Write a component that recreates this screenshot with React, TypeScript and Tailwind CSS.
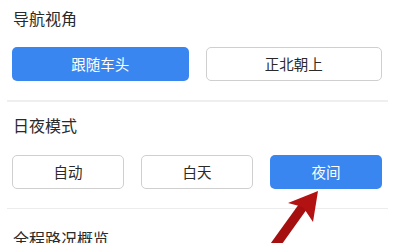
const font = { fontFamily: '"Noto Sans CJK SC", "Noto Sans", sans-serif' };

function OptionButton({ label, active }: { label: string; active?: boolean }) {
  return (
    <button
      className={`flex h-[34px] items-center justify-center rounded-[5px] text-[14.5px] ${
        active ? "bg-[#3a86f0] text-white" : "border border-[#cfcfcf] bg-white text-[#2a2a2a]"
      }`}
    >
      {label}
    </button>
  );
}

export default function App() {
  return (
    <div className="relative h-[243px] w-[400px] overflow-hidden bg-white" style={font}>
      <section className="pl-[12px] pr-[18px] pt-[8px]">
        <h3 className="pl-px text-[16px] leading-[21px] text-[#2a2a2a]">导航视角</h3>
        <div className="mt-[18px] grid grid-cols-2 gap-[17px]">
          <OptionButton label="跟随车头" active />
          <OptionButton label="正北朝上" />
        </div>
      </section>
      <div className="mx-[7px] mt-[19px] h-[2px] w-[381px] bg-[#efefef]" />

      <section className="pl-[12px] pr-[18px] pt-[13px]">
        <h3 className="pl-px text-[16px] leading-[21px] text-[#2a2a2a]">日夜模式</h3>
        <div className="mt-[19px] grid grid-cols-3 gap-[17px]">
          <OptionButton label="自动" />
          <OptionButton label="白天" />
          <OptionButton label="夜间" active />
        </div>
      </section>
      <div className="mx-[7px] mt-[19px] h-px w-[381px] bg-[#ececec]" />

      <section className="pl-[12px] pt-[19px]">
        <h3 className="pl-px text-[16px] leading-[21px] text-[#2a2a2a]">全程路况概览</h3>
      </section>

      <svg className="absolute left-0 top-0" width="400" height="243" viewBox="0 0 400 243">
        <polygon points="268,247 299,204 307,209 277,251" fill="#a50f0f" />
        <polygon points="318,191 288,203 303,207 313,222" fill="#b31212" />
      </svg>
    </div>
  );
}
